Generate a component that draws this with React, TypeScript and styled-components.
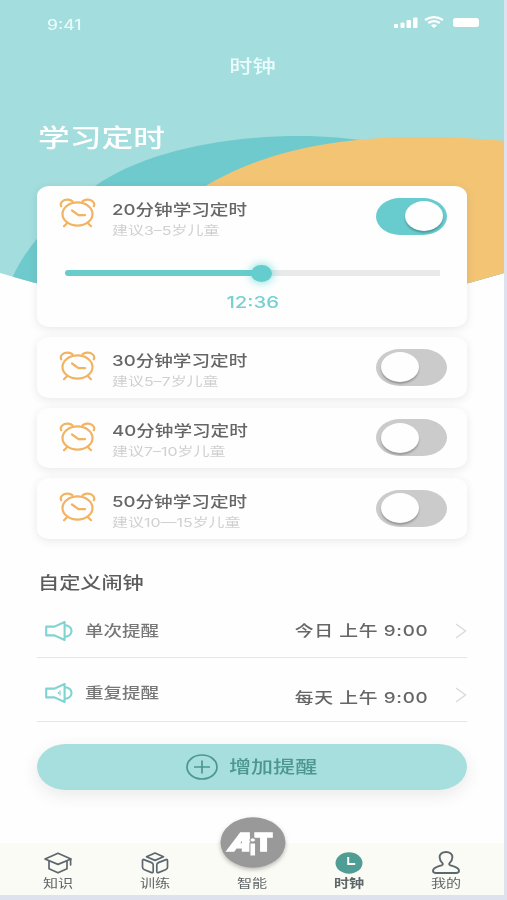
import React from "react";
import styled, { createGlobalStyle } from "styled-components";

const GlobalStyle = createGlobalStyle`
  * { box-sizing: border-box; }
  html, body { margin: 0; padding: 0; }
  body {
    background: #dee2ef;
    font-family: Inter, "Noto Sans CJK SC", sans-serif;
  }
`;

type LabelProps = {
  $size: number;
  $color: string;
  $weight?: number;
  $line?: number;
  $stretch?: number;
  $origin?: "left" | "center" | "right";
  $spacing?: number;
};

const Label = styled.span<LabelProps>`
  display: block;
  width: max-content;
  white-space: pre;
  font-size: ${(p) => p.$size}px;
  line-height: ${(p) => p.$line ?? 20}px;
  font-weight: ${(p) => p.$weight ?? 400};
  letter-spacing: ${(p) => p.$spacing ?? 0}px;
  color: ${(p) => p.$color};
  transform: scaleX(${(p) => p.$stretch ?? 1.26});
  transform-origin: ${(p) => p.$origin ?? "left"} center;
`;

const Screen = styled.main`
  position: relative;
  isolation: isolate;
  display: flex;
  flex-direction: column;
  width: 504px;
  height: 895px;
  background: #fefefe;
  overflow: hidden;
`;

const Backdrop = styled.svg`
  position: absolute;
  z-index: -1;
  top: 0;
  left: 0;
`;

const StatusBar = styled.header`
  display: flex;
  justify-content: space-between;
  height: 46px;
  padding: 15px 23px 0 47px;
`;

const StatusIcons = styled.svg`
  display: block;
`;

const PageTitle = styled.div`
  display: flex;
  justify-content: center;
  height: 40px;
  padding: 10px 0 0 2px;
`;

const Heading = styled.div`
  height: 100px;
  padding: 37px 0 0 38px;
`;

const TimerList = styled.section`
  display: flex;
  flex-direction: column;
  gap: 10px;
  padding: 0 37px;
`;

const TimerCard = styled.article`
  border-radius: 12px / 10px;
  background: #fefefe;
  box-shadow: 0 2px 9px rgba(70, 75, 90, 0.12);
`;

const TimerRow = styled.div`
  display: flex;
  align-items: center;
  height: 60.5px;
  padding: 0 20px 0 22px;
`;

const ClockIcon = styled.svg<{ $lift: number }>`
  margin-bottom: ${(p) => p.$lift}px;
`;

const TimerText = styled.div`
  flex: 1;
  display: flex;
  flex-direction: column;
  gap: 2px;
  margin-left: 16px;
  padding-top: 7px;
`;

const Switch = styled.div<{ $on?: boolean }>`
  display: flex;
  justify-content: ${(p) => (p.$on ? "flex-end" : "flex-start")};
  align-items: center;
  width: 71px;
  height: 37px;
  padding: 0 4px 0 ${(p) => (p.$on ? 4 : 5)}px;
  border-radius: 24px / 18.5px;
  background: ${(p) => (p.$on ? "#68cccf" : "#cbcbcb")};
`;

const Knob = styled.div`
  width: 38px;
  height: 30px;
  border-radius: 50%;
  background: #fefefe;
  box-shadow: 0 2px 2px rgba(0, 0, 0, 0.25);
`;

const Progress = styled.div`
  display: flex;
  align-items: center;
  height: 17px;
  margin: 18px 27.5px 0 28px;
`;

const Track = styled.div<{ $filled?: boolean }>`
  flex: ${(p) => (p.$filled ? "0 0 188px" : "1")};
  height: 6px;
  border-radius: ${(p) => (p.$filled ? "4px 0 0 4px" : "0")};
  background: ${(p) => (p.$filled ? "#68cccb" : "#e9e9e9")};
`;

const Thumb = styled.div`
  position: relative;
  z-index: 1;
  width: 21px;
  height: 17px;
  margin: 0 -2px;
  border-radius: 50%;
  background: #65cdce;
  box-shadow: 0 0 9px 1px rgba(82, 210, 210, 0.65);
`;

const Remaining = styled.div`
  display: flex;
  justify-content: center;
  height: 45.5px;
  padding: 10px 0 0 1px;
`;

const Alarms = styled.section`
  padding: 34px 37px 0;
`;

const AlarmHead = styled.div`
  height: 31px;
  padding-left: 1px;
`;

const AlarmRow = styled.div<{ $height: number }>`
  display: flex;
  align-items: center;
  height: ${(p) => p.$height}px;
  padding-left: 8px;
  border-bottom: 1.5px solid #e3e6e7;
`;

const AlarmName = styled.div<{ $drop: number }>`
  flex: 1;
  display: flex;
  align-items: center;
  gap: 12px;
  padding-top: ${(p) => p.$drop}px;
`;

const AlarmTime = styled.div<{ $drop: number }>`
  padding-top: ${(p) => p.$drop}px;
  margin-right: 27px;
`;

const Chevron = styled.svg<{ $drop: number }>`
  margin-top: ${(p) => p.$drop}px;
`;

const AddButton = styled.button`
  display: flex;
  align-items: center;
  gap: 11px;
  width: 430px;
  height: 46px;
  margin: 22px 37px 0;
  padding: 0 0 0 149px;
  border: 0;
  border-radius: 29px / 23px;
  background: #a6dfdd;
  font-family: inherit;
  box-shadow: 0 5px 16px rgba(60, 60, 70, 0.11);
`;

const NavBar = styled.nav`
  display: grid;
  grid-template-columns: repeat(5, 96.8px);
  justify-content: center;
  height: 52px;
  margin-top: auto;
  background: #fafbf4;
`;

const NavItem = styled.a`
  position: relative;
  display: flex;
  flex-direction: column;
  justify-content: flex-end;
  align-items: center;
  gap: 1px;
  padding: 0 0 3px;
`;

const NavLogo = styled.svg`
  position: absolute;
  top: -26px;
  left: 16px;
  overflow: visible;
  filter: drop-shadow(0 2px 2px rgba(0, 0, 0, 0.25));
`;

const AlarmClock = ({ lift }: { lift: number }) => (
  <ClockIcon $lift={lift} width="37" height="30" viewBox="0 0 37 30" fill="none" stroke="#f2b362" strokeWidth="2.2" strokeLinecap="round">
    <ellipse cx="18.5" cy="16" rx="15" ry="11.6" />
    <path d="M2.2 8.2C.4 4.5 4.4 1.4 9 1.7c2 .1 3.4.8 4.4 1.5M34.8 8.2C36.6 4.5 32.6 1.4 28 1.7c-2 .1-3.4.8-4.4 1.5" />
    <path d="M8 25.2l-3 3M29 25.2l3 3" />
    <path d="M13 12.5l6.500 4.700h6.500" strokeLinejoin="round" />
  </ClockIcon>
);

const Speaker = ({ wave }: { wave?: boolean }) => (
  <svg width="28" height="20" viewBox="0 0 28 20" fill="none" stroke="#7fd4d2" strokeWidth="2.1" strokeLinejoin="round">
    <path d="M1.2 5.600h8.300L19.600 1v18L9.500 14.400H1.200z" />
    <path d="M20 4.500h2c6 2.300 6 8.700 0 11h-2" />
    {wave && <path d="M15 7.500v5M13.500 9v2" strokeWidth="1.200" />}
  </svg>
);

const icons = {
  cap: (
    <svg width="28" height="22" viewBox="0 0 28 22" fill="none" stroke="#5c6770" strokeWidth="1.700" strokeLinejoin="round" strokeLinecap="round">
      <path d="M1 7L14 1.200 27 7 14 12.400z" />
      <path d="M5 9.500v7.200L14 20.800l9-4.100V9.500M26.600 7.200v5.600" />
    </svg>
  ),
  cube: (
    <svg width="28" height="22" viewBox="0 0 28 22" fill="none" stroke="#5c6770" strokeWidth="1.700" strokeLinejoin="round">
      <path d="M14 1L22.500 4.800L14 8.400L5.500 4.800Z" />
      <path d="M3 7.600L10.600 10.600Q12.200 11.300 12.200 13V19.500Q12.200 21.200 10.600 20.600L3.500 17.800Q1.500 17 1.500 15.200V8.800Q1.500 7 3 7.600Z" />
      <path d="M25 7.600L17.400 10.600Q15.800 11.300 15.800 13V19.500Q15.800 21.200 17.400 20.600L24.500 17.800Q26.500 17 26.500 15.200V8.800Q26.500 7 25 7.600Z" />
    </svg>
  ),
  clock: (
    <svg width="28" height="22" viewBox="0 0 28 22" fill="none">
      <ellipse cx="14" cy="11" rx="13.500" ry="10.700" fill="#509d95" />
      <path d="M13.200 5v7h7" stroke="#fafbf4" strokeWidth="2" />
    </svg>
  ),
  person: (
    <svg width="28" height="23" viewBox="0 0 28 23" fill="none" stroke="#5c6770" strokeWidth="1.900" strokeLinejoin="round">
      <path d="M14 1C10 1 7.500 3.200 7.600 6.300C7.700 9.100 9 10.800 10.400 12.100C11.200 12.900 10.800 13.800 9.600 14.300C5.600 15.700 1 16.500 1 19.800C1 21.400 2.400 22 4 22H24C25.600 22 27 21.400 27 19.800C27 16.500 22.400 15.700 18.400 14.300C17.200 13.800 16.800 12.900 17.600 12.100C19 10.800 20.300 9.100 20.400 6.300C20.500 3.200 18 1 14 1Z" />
    </svg>
  ),
  logo: (
    <NavLogo width="66" height="51" viewBox="0 0 66 51">
      <ellipse cx="33" cy="25.500" rx="32.500" ry="25.200" fill="#999" />
      <g fill="#fff" stroke="#fff" strokeWidth="1.600" fontFamily="Inter, sans-serif" fontWeight="900">
        <text transform="translate(6.500 34) skewX(-20) scale(1.220 1)" fontSize="24.500">A</text>
        <text transform="translate(34.500 34) scale(1.080 1)" fontSize="24.500">T</text>
        <text transform="translate(28.500 39) scale(1.250 1)" fontSize="23" stroke="#999" strokeWidth=".8">i</text>
      </g>
    </NavLogo>
  ),
};

const timers = [
  { title: "20分钟学习定时", hint: "建议3–5岁儿童", on: true, lift: 6 },
  { title: "30分钟学习定时", hint: "建议5–7岁儿童", lift: 2 },
  { title: "40分钟学习定时", hint: "建议7–10岁儿童", lift: 2 },
  { title: "50分钟学习定时", hint: "建议10—15岁儿童", lift: 2 },
];

const alarms = [
  { name: "单次提醒", time: "今日 上午 9:00", height: 54, nameDrop: 2, timeDrop: 2, chevronDrop: 2 },
  { name: "重复提醒", time: "每天 上午 9:00", height: 64, nameDrop: 8, timeDrop: 18, chevronDrop: 12, wave: true },
];

const tabs: { name: string; icon: keyof typeof icons; active?: boolean }[] = [
  { name: "知识", icon: "cap" },
  { name: "训练", icon: "cube" },
  { name: "智能", icon: "logo" },
  { name: "时钟", icon: "clock", active: true },
  { name: "我的", icon: "person" },
];

export default function App() {
  return (
    <>
      <GlobalStyle />
      <Screen>
        <Backdrop width="504" height="330" viewBox="0 0 504 330">
          <clipPath id="wave">
            <path d="M0 0H504V273Q252 350 0 273Z" />
          </clipPath>
          <g clipPath="url(#wave)">
            <rect width="504" height="330" fill="#a3dddd" />
            <path d="M4 300C16 258 45 222 95 186C142 153 220 136 300 136C400 136 504 170 504 240V330H0Z" fill="#6ecacc" />
            <path d="M150 240C180 205 195 190 220 178C270 151 340 137 415 137C450 137 480 138.500 504 141V330H150Z" fill="#f3c473" />
          </g>
        </Backdrop>

        <StatusBar>
          <Label $size={14} $color="#e9fafa" $weight={500} $stretch={1.240}>9:41</Label>
          <StatusIcons width="88" height="14" viewBox="0 0 88 14" fill="#fff">
            <rect x="1" y="9" width="4" height="4" rx="1" />
            <rect x="7.500" y="7.500" width="4" height="5.500" rx="1" />
            <rect x="13.500" y="5" width="4.500" height="8" rx="1" />
            <rect x="20" y="2.500" width="4.500" height="10.500" rx="1" />
            <g fill="none" stroke="#fff" strokeWidth="2.200">
              <path d="M32 5Q41 -.8 50 5M35.200 8Q41 4.200 46.800 8" />
            </g>
            <path d="M37.800 10.300Q41 8.300 44.200 10.300L41 13Z" />
            <rect x="60" y="3" width="26" height="9" rx="2.500" />
          </StatusIcons>
        </StatusBar>
        <PageTitle>
          <Label $size={18.500} $color="#ebfbfc" $origin="center" $weight={500}>时钟</Label>
        </PageTitle>
        <Heading>
          <Label $size={25} $line={30} $color="#fff" $weight={500} $stretch={1.270}>学习定时</Label>
        </Heading>

        <TimerList>
          {timers.map((t) => (
            <TimerCard key={t.title}>
              <TimerRow>
                <AlarmClock lift={t.lift} />
                <TimerText>
                  <Label $size={15} $color="#666" $weight={500} $stretch={1.240}>{t.title}</Label>
                  <Label $size={12} $line={18} $color="#d0d0d0" $stretch={1.330}>{t.hint}</Label>
                </TimerText>
                <Switch $on={t.on}>
                  <Knob />
                </Switch>
              </TimerRow>
              {t.on && (
                <>
                  <Progress>
                    <Track $filled />
                    <Thumb />
                    <Track />
                  </Progress>
                  <Remaining>
                    <Label $size={16} $color="#79d0d0" $origin="center" $weight={500} $stretch={1.270}>12:36</Label>
                  </Remaining>
                </>
              )}
            </TimerCard>
          ))}
        </TimerList>

        <Alarms>
          <AlarmHead>
            <Label $size={16.800} $color="#5c5c5c" $weight={500}>自定义闹钟</Label>
          </AlarmHead>
          {alarms.map((a) => (
            <AlarmRow key={a.name} $height={a.height}>
              <AlarmName $drop={a.nameDrop}>
                <Speaker wave={a.wave} />
                <Label $size={14.700} $color="#777" $weight={500}>{a.name}</Label>
              </AlarmName>
              <AlarmTime $drop={a.timeDrop}>
                <Label $size={14.700} $color="#666" $origin="right" $weight={500} $spacing={0.500} $stretch={1.280}>{a.time}</Label>
              </AlarmTime>
              <Chevron $drop={a.chevronDrop} width="12" height="16" viewBox="0 0 12 16" fill="none" stroke="#d8dadd" strokeWidth="1.400">
                <path d="M1 1l9.500 7L1 15" />
              </Chevron>
            </AlarmRow>
          ))}
        </Alarms>

        <AddButton>
          <svg width="32" height="26" viewBox="0 0 32 26" fill="none" stroke="#4d9692" strokeWidth="1.700">
            <ellipse cx="16" cy="13" rx="15" ry="12" />
            <path d="M8 13h16M16 6.500v13" />
          </svg>
          <Label $size={17.500} $line={24} $color="#4d9692" $weight={500}>增加提醒</Label>
        </AddButton>

        <NavBar>
          {tabs.map((t) => (
            <NavItem key={t.name}>
              {icons[t.icon]}
              <Label $size={12} $line={17} $color="#5f6669" $weight={t.active ? 600 : 400} $origin="center">{t.name}</Label>
            </NavItem>
          ))}
        </NavBar>
      </Screen>
    </>
  );
}
